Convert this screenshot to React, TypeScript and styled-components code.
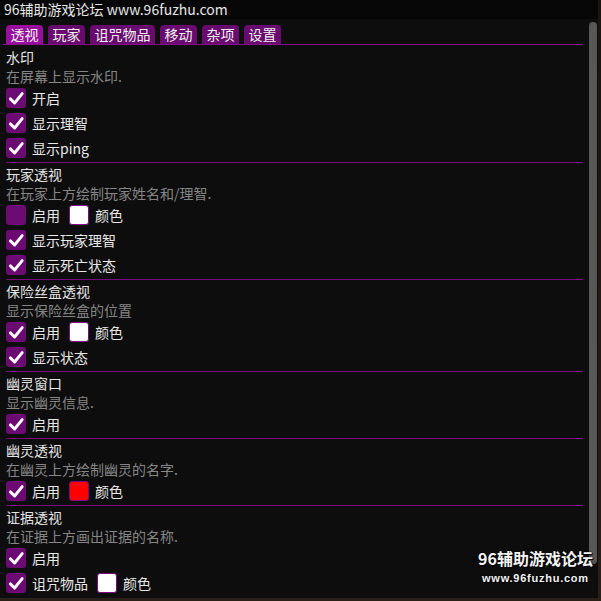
import React from "react";
import styled, { createGlobalStyle } from "styled-components";

const GlobalStyle = createGlobalStyle`
  html, body { margin: 0; padding: 0; background: #221a13; }
  body { font-family: "Noto Sans CJK SC", "Noto Sans", sans-serif; }
  * { box-sizing: border-box; }
`;

const Stage = styled.div`
  position: relative;
  width: 601px;
  height: 601px;
  overflow: hidden;
  background: linear-gradient(180deg, #1a140f 0%, #2a2017 100%);
`;

const Window = styled.div`
  width: 598px;
  height: 598px;
  background: #0d0d0d;
  display: flex;
  flex-direction: column;
  overflow: hidden;
`;

const TitleBar = styled.div`
  height: 19px;
  line-height: 19px;
  padding-left: 4px;
  background: #060606;
  color: #e6e6e6;
  font-size: 14px;
  white-space: nowrap;
`;

const Body = styled.div`
  flex: 1;
  display: flex;
  min-height: 0;
`;

const Main = styled.div`
  width: 586px;
  display: flex;
  flex-direction: column;
  overflow: hidden;
`;

const TabBar = styled.div`
  display: flex;
  gap: 5px;
  margin-left: 3px;
  width: 580px;
  padding: 6px 0 0 3px;
  border-bottom: 1px solid #880c8e;
`;

const Tab = styled.div<{ $active?: boolean }>`
  height: 19px;
  line-height: 19px;
  padding: 0 4.5px;
  font-size: 14px;
  color: #f0f0f0;
  background: ${(p) => (p.$active ? "#970e9d" : "#690a6e")};
  border-radius: 4px 4px 0 0;
  white-space: nowrap;
`;

const Section = styled.div<{ $first?: boolean }>`
  margin-left: 6px;
  width: 577px;
  padding: ${(p) => (p.$first ? "3px" : "2px")} 0 4px 0;
  border-top: ${(p) => (p.$first ? "none" : "1px solid #770a7d")};
  display: flex;
  flex-direction: column;
`;

const Title = styled.div`
  height: 19px;
  line-height: 19px;
  font-size: 14px;
  color: #e4e4e4;
`;

const Desc = styled.div`
  height: 19px;
  line-height: 19px;
  font-size: 14px;
  color: #868686;
  white-space: nowrap;
`;

const Rows = styled.div`
  margin-top: 2px;
  display: flex;
  flex-direction: column;
  gap: 5px;
`;

const Row = styled.div`
  height: 20px;
  display: flex;
  align-items: center;
`;

const Box = styled.div`
  width: 20px;
  height: 20px;
  border-radius: 3px;
  background: #6c0a74;
  flex-shrink: 0;
  display: flex;
`;

const Label = styled.span`
  margin-left: 6px;
  font-size: 14px;
  color: #e8e8e8;
  white-space: nowrap;
`;

const Swatch = styled.div<{ $color: string }>`
  margin-left: 9px;
  width: 20px;
  height: 20px;
  border-radius: 3px;
  background: ${(p) => p.$color};
  border: 1px solid #7a0a80;
  flex-shrink: 0;
`;

const SwatchLabel = styled.span`
  margin-left: 6px;
  font-size: 14px;
  color: #e8e8e8;
`;

const ScrollTrack = styled.div`
  width: 12px;
  padding: 3px 1px 0 3px;
`;

const Thumb = styled.div`
  width: 8px;
  height: 542px;
  border-radius: 4px;
  background: #575757;
`;

const Watermark = styled.div`
  position: absolute;
  left: 478px;
  top: 547px;
  display: flex;
  flex-direction: column;
  align-items: center;
  color: #f4f4f4;
  text-shadow: 0 0 2px #000, 1px 1px 1px #000;
  pointer-events: none;
`;

const WmTitle = styled.div`
  font-size: 16px;
  font-weight: 700;
  line-height: 22px;
  font-family: "Noto Sans CJK SC", "DejaVu Sans", sans-serif;
`;

const WmUrl = styled.div`
  margin-top: 2px;
  font-size: 11px;
  font-weight: 700;
  line-height: 14px;
  font-family: "Liberation Sans", Arial, sans-serif;
  letter-spacing: 0.75px;
`;

const Check = () => (
  <svg width="20" height="20" viewBox="0 0 20 20">
    <path
      d="M4.4 10.9 L8.6 15 L16.2 5.6"
      fill="none"
      stroke="#ffffff"
      strokeWidth="2.9"
      strokeLinecap="round"
      strokeLinejoin="round"
    />
  </svg>
);

type Item = { label: string; checked: boolean; color?: string };
type Sec = { title: string; desc: string; items: Item[] };

const sections: Sec[] = [
  {
    title: "水印",
    desc: "在屏幕上显示水印.",
    items: [
      { label: "开启", checked: true },
      { label: "显示理智", checked: true },
      { label: "显示ping", checked: true },
    ],
  },
  {
    title: "玩家透视",
    desc: "在玩家上方绘制玩家姓名和/理智.",
    items: [
      { label: "启用", checked: false, color: "#ffffff" },
      { label: "显示玩家理智", checked: true },
      { label: "显示死亡状态", checked: true },
    ],
  },
  {
    title: "保险丝盒透视",
    desc: "显示保险丝盒的位置",
    items: [
      { label: "启用", checked: true, color: "#ffffff" },
      { label: "显示状态", checked: true },
    ],
  },
  {
    title: "幽灵窗口",
    desc: "显示幽灵信息.",
    items: [{ label: "启用", checked: true }],
  },
  {
    title: "幽灵透视",
    desc: "在幽灵上方绘制幽灵的名字.",
    items: [{ label: "启用", checked: true, color: "#ff0000" }],
  },
  {
    title: "证据透视",
    desc: "在证据上方画出证据的名称.",
    items: [
      { label: "启用", checked: true },
      { label: "诅咒物品", checked: true, color: "#ffffff" },
    ],
  },
];

const tabs = ["透视", "玩家", "诅咒物品", "移动", "杂项", "设置"];

export default function App() {
  return (
    <>
      <GlobalStyle />
      <Stage>
        <Window>
          <TitleBar>96辅助游戏论坛 www.96fuzhu.com</TitleBar>
          <Body>
            <Main>
              <TabBar>
                {tabs.map((t, i) => (
                  <Tab key={t} $active={i === 0}>
                    {t}
                  </Tab>
                ))}
              </TabBar>
              {sections.map((s, i) => (
                <Section key={s.title} $first={i === 0}>
                  <Title>{s.title}</Title>
                  <Desc>{s.desc}</Desc>
                  <Rows>
                    {s.items.map((it) => (
                      <Row key={it.label}>
                        <Box>{it.checked && <Check />}</Box>
                        <Label>{it.label}</Label>
                        {it.color && (
                          <>
                            <Swatch $color={it.color} />
                            <SwatchLabel>颜色</SwatchLabel>
                          </>
                        )}
                      </Row>
                    ))}
                  </Rows>
                </Section>
              ))}
            </Main>
            <ScrollTrack>
              <Thumb />
            </ScrollTrack>
          </Body>
        </Window>
        <Watermark>
          <WmTitle>96辅助游戏论坛</WmTitle>
          <WmUrl>www.96fuzhu.com</WmUrl>
        </Watermark>
      </Stage>
    </>
  );
}
